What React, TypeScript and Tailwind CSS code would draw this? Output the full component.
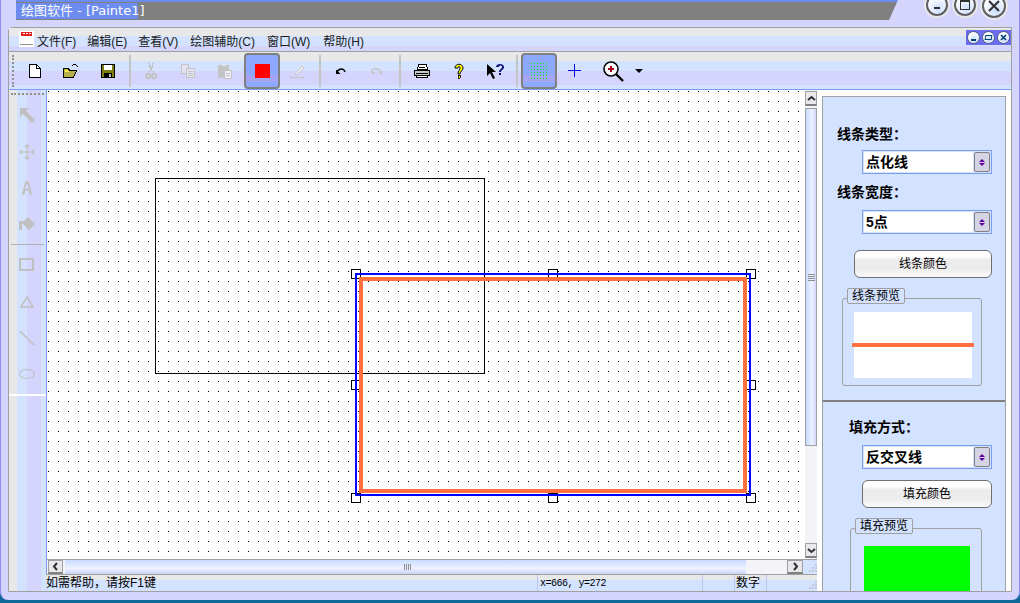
import type { ReactNode } from 'react'

const cjk = "font-['Liberation_Sans','Noto_Sans_CJK_SC',sans-serif]"
const stripes =
  'bg-[linear-gradient(180deg,#e8e8e8_0,#e8e8e8_9px,#d2e2ff_9px,#d2e2ff_19px,#d4d4fc_19px,#d4d4fc_33px,#d2e2ff_33px)]'

function Sep({ l = 2, r = 2 }: { l?: number; r?: number }) {
  return <div className="h-[32px] w-[2px] shrink-0 bg-[#c4c4c4]" style={{ marginLeft: l, marginRight: r }} />
}

function ToolBtn({ children, w = 36, active }: { children: ReactNode; w?: number; active?: boolean }) {
  if (active) {
    return (
      <div className="flex h-[36px] w-[36px] shrink-0 items-center justify-center rounded-[4px] border-2 border-[#808080] bg-[linear-gradient(180deg,#8ca8ff_0,#8ca8ff_20px,#a5a5f8_20px,#a5a5f8_27px,#8ca8ff_27px)]">
        {children}
      </div>
    )
  }
  return (
    <div className="flex h-[36px] shrink-0 items-center justify-center" style={{ width: w }}>
      {children}
    </div>
  )
}

function Icon({ children, size = 18 }: { children: ReactNode; size?: number }) {
  return (
    <svg width={size} height={size} viewBox="0 0 18 18" shapeRendering="crispEdges">
      {children}
    </svg>
  )
}

const NewIcon = () => (
  <Icon>
    <path d="M3.5 2.5h7l4 4v9h-11z" fill="#fff" stroke="#000" />
    <path d="M10.5 2.5v4h4" fill="none" stroke="#000" />
  </Icon>
)
const OpenIcon = () => (
  <Icon>
    <path d="M1.5 6.5h5l1 2h7l-3 7h-10z" fill="#b5b04a" stroke="#000" />
    <path d="M3 8h3l1 2h-4z" fill="#ffe84a" />
    <path d="M10 4c2-2 4-2 5 0l1 1" fill="none" stroke="#000" />
  </Icon>
)
const SaveIcon = () => (
  <Icon>
    <path d="M2.5 2.5h13v13h-13z" fill="#7e7e10" stroke="#000" />
    <path d="M5 3h8v5h-8z" fill="#fff" />
    <path d="M5 11h8v4h-8z" fill="#000" />
    <path d="M10 12h2v3h-2z" fill="#c0c0c0" />
  </Icon>
)
const CutIcon = () => (
  <Icon>
    <path d="M7 1l2 8M11 1l-2 8M7 9l-1 3M11 9l1 3" stroke="#c4c4c4" strokeWidth="1.4" fill="none" />
    <circle cx="6" cy="14" r="2.2" fill="none" stroke="#c4c4c4" strokeWidth="1.4" />
    <circle cx="12" cy="14" r="2.2" fill="none" stroke="#c4c4c4" strokeWidth="1.4" />
  </Icon>
)
const CopyIcon = () => (
  <Icon>
    <path d="M2.5 2.5h7v9h-7z" fill="#e4e4f4" stroke="#c4c4c4" />
    <path d="M7.5 6.5h8v9h-8z" fill="#e4e4f4" stroke="#c4c4c4" />
    <path d="M9 9h5M9 11h5M9 13h5" stroke="#c4c4c4" />
  </Icon>
)
const PasteIcon = () => (
  <Icon>
    <path d="M2 3h11v13h-11z" fill="#c4c4c4" />
    <path d="M6 2h4v2h-4z" fill="#e4e4f4" />
    <path d="M8.5 8.5h7v8h-7z" fill="#eeeef8" stroke="#c4c4c4" />
    <path d="M10 11h4M10 13h4" stroke="#c4c4c4" />
  </Icon>
)
const PenIcon = () => (
  <Icon>
    <path d="M6 12l7-8 2 2-7 7z" fill="#eeeef8" stroke="#c4c4c4" shapeRendering="auto" />
    <path d="M1 15h14" stroke="#c4c4c4" />
  </Icon>
)
const UndoIcon = () => (
  <Icon>
    <path d="M4 8l0 4 4 0z" fill="#000" />
    <path d="M5 10c2-4 7-4 8 0" fill="none" stroke="#000" strokeWidth="1.4" shapeRendering="auto" />
  </Icon>
)
const RedoIcon = () => (
  <Icon>
    <path d="M14 8l0 4-4 0z" fill="#c4c4c4" />
    <path d="M13 10c-2-4-7-4-9-2l0 3 3 0" fill="none" stroke="#c4c4c4" strokeWidth="1.4" shapeRendering="auto" />
  </Icon>
)
const PrintIcon = () => (
  <Icon>
    <path d="M5.5 2.5h8l1 5h-10z" fill="#fff" stroke="#000" />
    <path d="M1.5 8.5h15v5h-15z" fill="#c8c8c8" stroke="#000" />
    <path d="M3.5 13.5h11v2h-11z" fill="#fff" stroke="#000" />
    <path d="M6 5h6M6 7h6M3 11h12" stroke="#000" />
  </Icon>
)
const HelpIcon = () => (
  <Icon>
    <path d="M5 6c0-5 8-5 8 0 0 3-3 3-3 6h-2c0-3 2-4 2-6 0-2-2-2-2 0z" fill="#ffff00" stroke="#000" strokeWidth="1" shapeRendering="auto" />
    <path d="M8 13h2v3h-2z" fill="#ffff00" stroke="#000" strokeWidth="0.8" />
  </Icon>
)
const ContextHelpIcon = () => (
  <svg width="20" height="18" viewBox="0 0 20 18">
    <path d="M1 2l0 12 3-3 3 6 2-1-3-6 4 0z" fill="#000" />
    <path d="M10 5c0-4 8-4 8 0 0 3-3 3-3 5h-2c0-3 3-3 3-5 0-2-3-2-3 0zM13 11h2v2h-2z" fill="#10107c" />
  </svg>
)
const GridIcon = () => (
  <div className="grid grid-cols-6 gap-[2px]">
    {Array.from({ length: 36 }).map((_, i) => (
      <span key={i} className="h-[1px] w-[1px] bg-[#00f000]" />
    ))}
  </div>
)
const CrossIcon = () => (
  <Icon size={14}>
    <path d="M7.5 1v13M1 7.5h13" stroke="#0000e0" strokeWidth="1" transform="scale(1.28) translate(-1 -1)" />
  </Icon>
)
const ZoomIcon = () => (
  <svg width="24" height="24" viewBox="0 0 24 24">
    <circle cx="10" cy="10" r="7" fill="#fff" stroke="#000" strokeWidth="1.6" />
    <path d="M7 10h6M10 7v6" stroke="#a00020" strokeWidth="2" />
    <path d="M15 15l7 7" stroke="#000" strokeWidth="2.4" />
  </svg>
)

function MainToolbar() {
  return (
    <div className={`flex h-[38px] items-center pl-[3px] ${stripes} border-t border-[#a0a0a0]`}>
      <div className="mr-[3px] h-[32px] w-[2px] border-l-2 border-dotted border-[#909090]" />
      <ToolBtn w={36}><NewIcon /></ToolBtn>
      <ToolBtn w={36}><OpenIcon /></ToolBtn>
      <ToolBtn w={38}><SaveIcon /></ToolBtn>
      <Sep />
      <ToolBtn w={36}><CutIcon /></ToolBtn>
      <ToolBtn w={37}><CopyIcon /></ToolBtn>
      <ToolBtn w={38}><PasteIcon /></ToolBtn>
      <ToolBtn active>
        <span className="h-[14px] w-[15px] bg-[#ff0000]" />
      </ToolBtn>
      <ToolBtn w={36}><PenIcon /></ToolBtn>
      <Sep l={3} r={3} />
      <ToolBtn w={34}><UndoIcon /></ToolBtn>
      <ToolBtn w={38}><RedoIcon /></ToolBtn>
      <Sep l={3} r={3} />
      <ToolBtn w={36}><PrintIcon /></ToolBtn>
      <ToolBtn w={38}><HelpIcon /></ToolBtn>
      <ToolBtn w={36}><ContextHelpIcon /></ToolBtn>
      <Sep l={2} r={3} />
      <ToolBtn active><GridIcon /></ToolBtn>
      <ToolBtn w={36}><CrossIcon /></ToolBtn>
      <ToolBtn w={40}><ZoomIcon /></ToolBtn>
      <ToolBtn w={12}>
        <span className="h-0 w-0 border-x-[4px] border-t-[4px] border-x-transparent border-t-black" />
      </ToolBtn>
    </div>
  )
}

function SideSlot({ h, children }: { h: number; children: ReactNode }) {
  return (
    <div className="flex items-center justify-center pr-[2px]" style={{ height: h }}>
      {children}
    </div>
  )
}

function SideToolbar() {
  const c = '#c0c0c0'
  return (
    <div className="flex h-full w-[37px] shrink-0 flex-col bg-[linear-gradient(90deg,#e8e8e8_0,#e8e8e8_8px,#d2e2ff_8px,#d2e2ff_18px,#d4d4fc_18px,#d4d4fc_32px,#d2e2ff_32px)]">
      <div className="mx-[2px] mt-[3px] h-[3px] border-t-2 border-dotted border-[#909090]" />
      <SideSlot h={37}>
        <svg width="18" height="18" viewBox="0 0 18 18"><path d="M2 2h9l-3 3 9 9-3 3-9-9-3 3z" fill={c} /></svg>
      </SideSlot>
      <SideSlot h={37}>
        <svg width="16" height="16" viewBox="0 0 16 16"><path d="M8 1v14M1 8h14M6 3l2-2 2 2M6 13l2 2 2-2M3 6l-2 2 2 2M13 6l2 2-2 2" fill="none" stroke={c} strokeWidth="1.2" /></svg>
      </SideSlot>
      <SideSlot h={36}>
        <svg width="12" height="18" viewBox="0 0 14 18"><path d="M5 1h4l4 16h-3l-1-5h-4l-1 5h-3zM6 5l-1 5h4l-1-5z" fill={c} fillRule="evenodd" /></svg>
      </SideSlot>
      <SideSlot h={36}>
        <svg width="18" height="16" viewBox="0 0 18 16"><path d="M1 5h5l4-4 7 7-6 6-6-6-1 0v6h-3z" fill={c} /></svg>
      </SideSlot>
      <div className="mx-[2px] mt-[2px] h-[1px] bg-[#b0b0b0]" />
      <div className="h-[1px]" />
      <SideSlot h={37}>
        <span className="h-[13px] w-[15px] border-2 border-[#c0c0c0]" />
      </SideSlot>
      <SideSlot h={37}>
        <svg width="14" height="12" viewBox="0 0 14 12"><path d="M7 1l6 10h-12z" fill="none" stroke={c} strokeWidth="1.5" /></svg>
      </SideSlot>
      <SideSlot h={36}>
        <svg width="16" height="16" viewBox="0 0 16 16"><path d="M1 1l14 14" stroke={c} strokeWidth="1.6" /></svg>
      </SideSlot>
      <SideSlot h={36}>
        <span className="h-[10px] w-[16px] rounded-[50%] border border-[#c0c0c0]" />
      </SideSlot>
      <div className="mt-[2px] h-[2px] bg-white" />
    </div>
  )
}

function Canvas() {
  return (
    <svg className="block h-full w-full" shapeRendering="crispEdges">
      <defs>
        <pattern id="dots" x="1" y="1" width="10" height="10" patternUnits="userSpaceOnUse">
          <rect width="1" height="1" fill="#000" />
        </pattern>
      </defs>
      <rect width="100%" height="100%" fill="#fff" />
      <rect width="100%" height="100%" fill="url(#dots)" />
      <rect x="108.5" y="88.5" width="329" height="195" fill="none" stroke="#000" />
      {[
        [309, 184], [506, 184], [704, 184],
        [309, 295], [704, 295],
        [309, 408], [506, 408], [704, 408],
      ].map(([x, y]) => (
        <rect key={`${x}-${y}`} x={x - 4.5} y={y - 4.5} width="9" height="9" fill="#fff" stroke="#000" />
      ))}
      <rect x="309" y="184" width="394" height="221" fill="none" stroke="#0000ff" strokeWidth="2" />
      <rect x="314" y="189" width="384" height="212" fill="none" stroke="#ff7040" strokeWidth="4" />
    </svg>
  )
}

function ScrollArrow({ d, w = 15, h = 15 }: { d: string; w?: number; h?: number }) {
  return (
    <div
      className="flex shrink-0 items-center justify-center border border-[#a0a0a0] border-b-2 border-b-[#808080] bg-[#e8e8ec]"
      style={{ width: w, height: h }}
    >
      <svg width="9" height="9" viewBox="0 0 9 9"><path d={d} fill="none" stroke="#303030" strokeWidth="2" /></svg>
    </div>
  )
}

function Grip() {
  return (
    <svg width="11" height="11" viewBox="0 0 11 11" shapeRendering="crispEdges">
      <path d="M9 1h2v2h-2zM6 4h2v2h-2zM9 4h2v2h-2zM3 7h2v2h-2zM6 7h2v2h-2zM9 7h2v2h-2z" fill="#c4c8d8" />
    </svg>
  )
}

function ComboBox({ label }: { label: string }) {
  return (
    <div className="flex h-[24px] w-[130px] items-stretch border border-[#7c9cf0] bg-[#d2e2ff] p-[1px]">
      <span className={`flex flex-1 items-center bg-white pl-[2px] text-[14px] font-bold text-black ${cjk}`}>{label}</span>
      <div className="ml-[1px] flex w-[16px] flex-col items-center justify-center rounded-[2px] border border-[#808080] bg-[#d4d4e4]">
        <span className="h-0 w-0 border-x-[3px] border-b-[3px] border-x-transparent border-b-[#6000a0]" />
        <span className="mt-[1px] h-0 w-0 border-x-[3px] border-t-[3px] border-x-transparent border-t-[#6000a0]" />
      </div>
    </div>
  )
}

function GlossButton({ label, w }: { label: string; w: number }) {
  return (
    <div
      className={`flex h-[28px] items-center justify-center rounded-[6px] border border-[#707070] bg-[linear-gradient(180deg,#ffffff_0,#ffffff_5px,#ececec_9px,#ececec_18px,#f8f8f8_24px)] text-[12px] text-black ${cjk}`}
      style={{ width: w }}
    >
      {label}
    </div>
  )
}

function Group({ title, ml, w, h, children }: { title: string; ml: number; w: number; h: number; children: ReactNode }) {
  return (
    <div className="relative rounded-[3px] border border-[#a0a0a0]" style={{ marginLeft: ml, width: w, height: h }}>
      <span className={`absolute left-[4px] top-[-11px] rounded-[2px] border border-[#a0a0a0] bg-[#d2e2ff] px-[4px] text-[12px] leading-[14px] text-black ${cjk}`}>
        {title}
      </span>
      <div className="pt-[1px]" />
      {children}
    </div>
  )
}

function RightPanel() {
  return (
    <div className="flex h-[495px] w-[184px] shrink-0 flex-col overflow-hidden border-x border-t border-[#a0a0a0] bg-[#d2e2ff]">
      <div className="flex h-[305px] shrink-0 flex-col border-b-2 border-[#808080]">
        <div className={`ml-[14px] mt-[29px] text-[14px] font-bold leading-[16px] text-black ${cjk}`}>线条类型：</div>
        <div className="ml-[39px] mt-[8px]"><ComboBox label="点化线" /></div>
        <div className={`ml-[14px] mt-[10px] text-[14px] font-bold leading-[16px] text-black ${cjk}`}>线条宽度：</div>
        <div className="ml-[39px] mt-[10px]"><ComboBox label="5点" /></div>
        <div className="ml-[31px] mt-[16px]"><GlossButton label="线条颜色" w={138} /></div>
        <div className="mt-[20px]">
          <Group title="线条预览" ml={19} w={140} h={88}>
            <div className="relative ml-[11px] mt-[12px] flex h-[66px] w-[118px] items-center bg-white">
              <div className="absolute left-[-2px] right-[-2px] h-[4px] rounded-[1px] bg-[#ff7040]" />
            </div>
          </Group>
        </div>
      </div>
      <div className={`ml-[26px] mt-[17px] shrink-0 text-[14px] font-bold leading-[16px] text-black ${cjk}`}>填充方式：</div>
      <div className="ml-[39px] mt-[10px] shrink-0"><ComboBox label="反交叉线" /></div>
      <div className="ml-[39px] mt-[11px] shrink-0"><GlossButton label="填充颜色" w={130} /></div>
      <div className="mt-[20px] shrink-0">
        <Group title="填充预览" ml={27} w={132} h={80}>
          <div className="ml-[13px] mt-[16px] h-[60px] w-[106px] bg-[#00ff00]" />
        </Group>
      </div>
    </div>
  )
}

function StatusBar() {
  const cell = 'flex h-full items-center border-r border-[#b8c8f0]'
  return (
    <div className="flex h-[17px] shrink-0 items-stretch border-t border-[#a0a0a0] bg-[linear-gradient(180deg,#e8e8e8_0,#e8e8e8_5px,#d2e2ff_5px)]">
      <div className={`w-[492px] ${cell} text-[12px] text-black ${cjk}`}>如需帮助，请按F1键</div>
      <div className={`w-[165px] ${cell} pl-[2px] font-['Liberation_Mono',monospace] text-[10px] tracking-[-0.5px] text-black`}>x=666, y=272</div>
      <div className={`w-[32px] ${cell}`} />
      <div className={`w-[32px] ${cell} pl-[1px] text-[12px] text-black ${cjk}`}>数字</div>
      <div className="flex flex-1 items-end justify-end"><Grip /></div>
    </div>
  )
}

function CaptionBtn({ children, size = 22 }: { children: ReactNode; size?: number }) {
  return (
    <div
      className="flex shrink-0 items-center justify-center rounded-full border-2 border-[#606060] bg-[radial-gradient(circle_at_60%_70%,#c8dcff_0,#ffffff_70%)] shadow-[0_0_0_2px_#e8e8e8]"
      style={{ width: size, height: size }}
    >
      {children}
    </div>
  )
}

function MdiBtn({ children }: { children: ReactNode }) {
  return (
    <div className="flex h-[13px] w-[13px] items-center justify-center rounded-full border border-[#506080] bg-[radial-gradient(circle_at_60%_70%,#c8dcff_0,#ffffff_70%)]">
      {children}
    </div>
  )
}

export default function App() {
  return (
    <div className="h-[603px] w-[1020px] overflow-hidden bg-[#0f6a9a]">
      <div className="flex h-[600px] flex-col rounded-b-[8px] border-x border-[#9090f0] bg-[#d4d4fc]">
        {/* caption */}
        <div className="flex h-[27px] shrink-0 items-start">
          <div className="ml-[15px] flex h-[20px] w-[882px] flex-col [clip-path:polygon(0_0,100%_0,calc(100%-9px)_100%,0_100%)]">
            <div className="h-[2px] bg-[#6c8cf0]" />
            <div className="h-[18px] bg-[#808080] pt-[1px]">
              <div className="flex h-[16px] w-[122px] items-center whitespace-nowrap bg-[#6c8cf0] pl-[5px] font-['DejaVu_Sans','Noto_Sans_CJK_SC',sans-serif] text-[13px] text-white">
                绘图软件 - [Painte1]
              </div>
            </div>
          </div>
          <div className="ml-[28px] mt-[-6px] flex gap-[6px]">
            <CaptionBtn><span className="mt-[6px] h-[2px] w-[6px] bg-[#303030]" /></CaptionBtn>
            <CaptionBtn><span className="h-[10px] w-[10px] border border-t-2 border-[#303030]" /></CaptionBtn>
            <CaptionBtn size={24}>
              <svg width="12" height="12" viewBox="0 0 12 12"><path d="M1 1l10 10M11 1l-10 10" stroke="#303030" strokeWidth="2" /></svg>
            </CaptionBtn>
          </div>
        </div>

        {/* client frame */}
        <div className="ml-[7px] mr-[7px] flex h-[565px] flex-col rounded-tl-[4px] border border-[#a0a0a0] bg-white">
          <div className="relative h-[23px] shrink-0 bg-[linear-gradient(180deg,#e8e8e8_0,#e8e8e8_8px,#d2e2ff_8px,#d2e2ff_18px,#d4d4fc_18px)]">
            <div className={`flex h-full items-center pl-[10px] pt-[5px] text-[12px] text-[#202020] ${cjk}`}>
              <svg className="mr-[3px] mt-[-7px] shrink-0" width="15" height="16" viewBox="0 0 15 16" shapeRendering="crispEdges">
                <rect width="15" height="16" fill="#fff" />
                <rect x="2" y="1" width="11" height="4" fill="#e02020" />
                <path d="M4 2.5h2M7 2.5h2M10 2.5h2" stroke="#fff" />
                <path d="M1 13.5h13" stroke="#909090" />
              </svg>
              <span className="mr-[11px]">文件(F)</span>
              <span className="mr-[11px]">编辑(E)</span>
              <span className="mr-[12px]">查看(V)</span>
              <span className="mr-[12px]">绘图辅助(C)</span>
              <span className="mr-[13px]">窗口(W)</span>
              <span>帮助(H)</span>
            </div>
            <div className="absolute right-0 top-[2px] flex h-[15px] items-center gap-[2px] bg-[#6c6cf0] px-[1px]">
              <MdiBtn><span className="mt-[5px] h-[2px] w-[5px] bg-[#004070]" /></MdiBtn>
              <MdiBtn><span className="h-[5px] w-[7px] skew-x-[-10deg] border border-[#004070]" /></MdiBtn>
              <MdiBtn>
                <svg width="7" height="7" viewBox="0 0 7 7"><path d="M1 1l5 5M6 1l-5 5" stroke="#004070" strokeWidth="1.6" /></svg>
              </MdiBtn>
            </div>
          </div>
          <MainToolbar />

          <div className="flex h-[502px] shrink-0 border-t border-[#7c9cf0]">
            <SideToolbar />
            <div className="flex w-[771px] shrink-0 flex-col">
              <div className="flex min-h-0 flex-1 flex-col border-l border-[#7c9cf0]">
                <div className="flex h-[469px] shrink-0">
                  <div className="h-full w-[758px] shrink-0"><Canvas /></div>
                  <div className="flex w-[12px] shrink-0 flex-col bg-[#f4f4f8] pb-[1px] pt-[1px]">
                    <ScrollArrow w={12} d="M1 6l3.5-3 3.5 3" />
                    <div className="mt-[2px] flex h-[338px] shrink-0 items-center justify-center border border-[#a0a0a0] bg-[linear-gradient(90deg,#c8dcff,#eef2ff_60%,#d4d4fc)]">
                      <span className="h-[7px] w-[7px] bg-[repeating-linear-gradient(180deg,#909090_0,#909090_1px,transparent_1px,transparent_2px)]" />
                    </div>
                    <div className="flex-1" />
                    <ScrollArrow w={12} d="M1 3l3.5 3 3.5-3" />
                  </div>
                </div>
                <div className="flex h-[15px] shrink-0 border-t border-[#a0a0a0] bg-[#f4f4f8] pl-[1px]">
                  <ScrollArrow h={14} d="M6 1l-3 3.5 3 3.5" />
                  <div className="ml-[2px] flex w-[681px] shrink-0 items-center justify-end bg-[linear-gradient(180deg,#c8dcff,#eef2ff_60%,#c8d4f8)] pr-[335px]">
                    <span className="h-[6px] w-[7px] bg-[repeating-linear-gradient(90deg,#909090_0,#909090_1px,transparent_1px,transparent_2px)]" />
                  </div>
                  <div className="w-[41px] shrink-0" />
                  <ScrollArrow w={16} h={14} d="M3 1l3 3.5-3 3.5" />
                  <div className="flex flex-1 items-end justify-end bg-[#d2e2ff]"><Grip /></div>
                </div>
              </div>
              <StatusBar />
            </div>
            <div className="w-[5px] shrink-0 bg-white" />
            <div className="flex shrink-0 flex-col pt-[6px]"><RightPanel /></div>
          </div>
        </div>
      </div>
    </div>
  )
}
